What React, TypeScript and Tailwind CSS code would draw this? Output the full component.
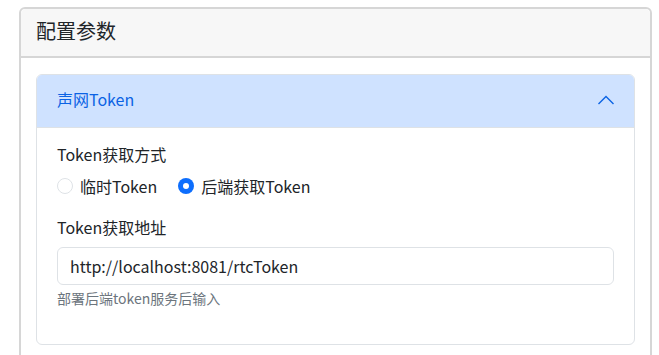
import React, { useState } from 'react';

const font = { fontFamily: '"Noto Sans CJK SC", "Noto Sans", sans-serif' };

function Radio({ checked, label, onClick }: { checked: boolean; label: string; onClick: () => void }) {
  return (
    <label className="flex items-center gap-[7px] cursor-pointer" onClick={onClick}>
      <span
        className={
          checked
            ? 'w-4 h-4 rounded-full bg-[#0d6efd] flex items-center justify-center'
            : 'w-4 h-4 rounded-full border border-[#dee2e6] bg-white'
        }
      >
        {checked && <span className="w-[6px] h-[6px] rounded-full bg-white" />}
      </span>
      <span className="text-base leading-6 text-[#212529]">{label}</span>
    </label>
  );
}

export default function App() {
  const [mode, setMode] = useState<'temp' | 'server'>('server');
  const [open, setOpen] = useState(true);

  return (
    <div className="w-[659px] h-[355px] overflow-hidden bg-white pl-[19px] pr-[7px] pt-[7px]" style={font}>
      <div className="border-2 border-[#d6d6d6] rounded-[6px] bg-white h-[400px]">
        {/* card header */}
        <div className="h-[49px] px-[15px] pb-[4px] flex items-center bg-[#f7f7f7] border-b-2 border-[#d6d6d6] rounded-t-[5px]">
          <h5 className="text-[20px] leading-6 text-[#212529]">配置参数</h5>
        </div>

        {/* card body */}
        <div className="px-[15px] pt-[16px]">
          <div className="border border-[#dee2e6] rounded-[6px] overflow-hidden">
            <button
              className="w-full h-[52px] px-5 pb-[4px] flex items-center justify-between bg-[#cfe2ff] text-[#0c63e4] text-base"
              onClick={() => setOpen(!open)}
            >
              <span>声网Token</span>
              <svg width="16" height="16" viewBox="0 0 16 16" fill="none" stroke="#0c63e4" strokeWidth="1.4" className="mt-[2px]">
                <path d="M0.5 12 8 4.5 15.5 12" />
              </svg>
            </button>
            {open && (
              <div className="px-5 pt-[14px] pb-[16px] border-t border-[#dee2e6]">
                <div className="text-base leading-6 text-[#212529] mb-2">Token获取方式</div>
                <div className="flex items-center gap-[21px] mb-[17px]">
                  <Radio checked={mode === 'temp'} label="临时Token" onClick={() => setMode('temp')} />
                  <Radio checked={mode === 'server'} label="后端获取Token" onClick={() => setMode('server')} />
                </div>
                <div className="text-base leading-6 text-[#212529] mb-2">Token获取地址</div>
                <input
                  className="w-full h-[38px] px-3 border border-[#dee2e6] rounded-[6px] text-base text-[#212529] outline-none"
                  defaultValue="http://localhost:8081/rtcToken"
                  style={font}
                />
                <div className="mt-[3px] text-sm leading-[21px] text-[#6c757d] mb-[19px]">部署后端token服务后输入</div>
              </div>
            )}
          </div>
        </div>
      </div>
    </div>
  );
}
